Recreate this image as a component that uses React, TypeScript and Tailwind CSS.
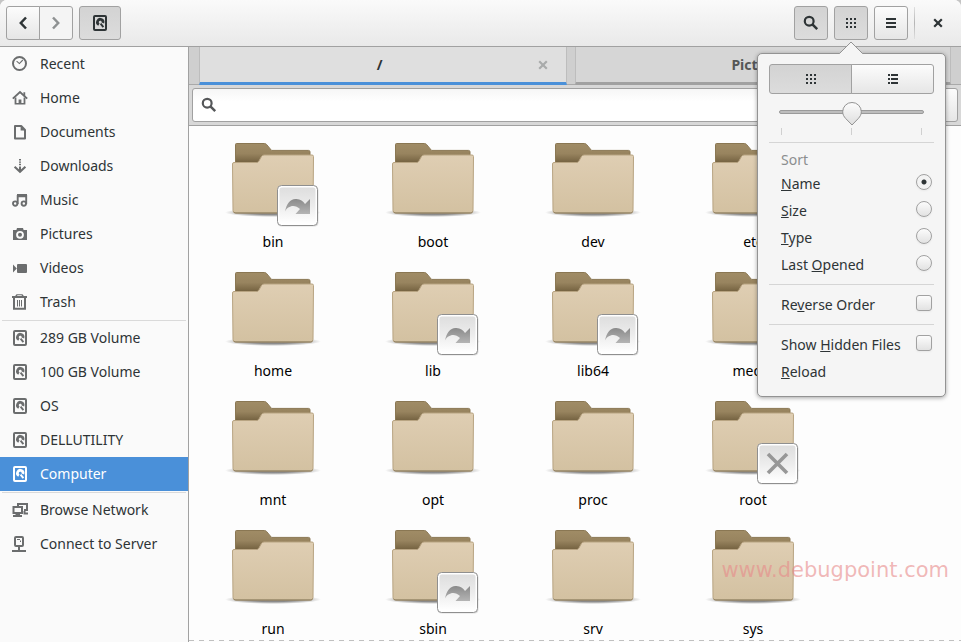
import React, { useState } from 'react';

type IconProps = { className?: string };

function Svg({ children, className = '' }: { children: React.ReactNode; className?: string }) {
  return (
    <svg viewBox="0 0 16 16" width="16" height="16" fill="currentColor" className={`shrink-0 ${className}`} aria-hidden="true">
      {children}
    </svg>
  );
}

const RecentIcon = () => (
  <Svg>
    <circle cx="7.5" cy="7.5" r="6.5" fill="none" stroke="currentColor" strokeWidth="2" />
    <path d="M4.6 5.2 7.4 7.6l3.4-3.6" fill="none" stroke="currentColor" strokeWidth="1.1" />
  </Svg>
);

const HomeIcon = () => (
  <Svg>
    <path d="M.8 8.6 8 2l7.2 6.6" fill="none" stroke="currentColor" strokeWidth="1.9" />
    <path d="M11.4 2.2h1.8v4h-1.8z" />
    <path d="M2.6 7.6h1.8V13h2.2V9.4h2.8V13h2.2V7.6h1.8v7H2.6z" />
  </Svg>
);

const DocumentIcon = () => (
  <Svg>
    <path d="M3 2h6.2L13 6v8.500H3z" fill="none" stroke="currentColor" strokeWidth="2" strokeLinejoin="round" />
    <path d="M8.600 2v4.400H13z" />
  </Svg>
);

const DownloadIcon = () => (
  <Svg>
    <path d="M7 1h2v1.400H7zM7 3.400h2v1.400H7zM7 5.800h2v1.400H7zM7 8.400h2v5H7z" />
    <path d="m2.600 8.800 5.400 5 5.400-5" fill="none" stroke="currentColor" strokeWidth="2.100" />
  </Svg>
);

const MusicIcon = () => (
  <Svg>
    <path d="M5 2h10v3.2H5z" />
    <g fill="none" stroke="currentColor" strokeWidth="1.9">
      <circle cx="3.2" cy="11.6" r="2.2" />
      <circle cx="11.8" cy="11.6" r="2.2" />
      <path d="M5.7 12V3M14.2 12V3" />
    </g>
  </Svg>
);

const CameraIcon = () => (
  <Svg>
    <path fillRule="evenodd" d="M5 2h6l.6 2H15v10H1V4h3.4zM8 4.900a3.900 3.900 0 1 0 0 7.800 3.900 3.900 0 0 0 0-7.800z" />
    <circle cx="8" cy="8.800" r="2" />
  </Svg>
);

const VideoIcon = () => (
  <Svg>
    <path d="M1 4.500 4.800 8.500 1 12.500z" />
    <rect x="5" y="4" width="10" height="9" rx="1" />
  </Svg>
);

const TrashIcon = () => (
  <Svg>
    <path d="M0 2h3.200L4.500.2h6L11.800 2H15v2H0zM5 2h5l-.5-.7h-4z" fillRule="evenodd" />
    <path d="M2 4v10.800h11V4" fill="none" stroke="currentColor" strokeWidth="2" />
    <path d="M5.500 6v6.500M7.500 6v6.500M9.500 6v6.500" stroke="currentColor" strokeWidth="1" />
  </Svg>
);

const DriveIcon = ({ className }: IconProps) => (
  <Svg className={className}>
    <rect x="2" y="1" width="12" height="14" rx="1" fill="none" stroke="currentColor" strokeWidth="2" />
    <path d="M10.900 8A2.800 2.800 0 1 0 6.900 9.600" fill="none" stroke="currentColor" strokeWidth="2.700" />
    <path d="m8.600 8.600 2.800 3.600" stroke="currentColor" strokeWidth="1.900" />
  </Svg>
);

const NetworkIcon = () => (
  <Svg>
    <g fill="none" stroke="currentColor" strokeWidth="2">
      <path d="M6 4V2h9v6h-3" />
      <rect x="1.500" y="5" width="8.500" height="6" />
    </g>
    <path d="M3.500 11.500h4.500V13h2v2H1v-2h2.500zM11.500 9h2v1.500H16v2h-4.500z" />
  </Svg>
);

const ServerIcon = () => (
  <Svg>
    <rect x="3" y="1" width="8" height="9" rx="1" fill="none" stroke="currentColor" strokeWidth="2" />
    <path d="M5 3h3v1H5zM8 4.500h1v1.500H8zM6 10h2v4H6zM0 14h14v2H0z" />
  </Svg>
);

const SearchIcon = () => (
  <Svg>
    <circle cx="6.200" cy="6.200" r="4.400" fill="none" stroke="currentColor" strokeWidth="2.200" />
    <path d="m9.400 9.400 4.800 4.800" stroke="currentColor" strokeWidth="2.500" />
  </Svg>
);

const GridIcon = () => (
  <Svg>
    {[3, 7, 11].map((y) => [3, 7, 11].map((x) => <rect key={`${x}-${y}`} x={x} y={y} width="2" height="2" />))}
  </Svg>
);

const ListIcon = () => (
  <Svg>
    <path d="M3 3h2v2H3zM3 7h2v2H3zM3 11h2v2H3zM6 3h7v2H6zM6 7h7v2H6zM6 11h7v2H6z" />
  </Svg>
);

const MenuIcon = () => (
  <Svg>
    <path d="M3 3h10v2H3zM3 7h10v2H3zM3 11h10v2H3z" />
  </Svg>
);

const CloseIcon = ({ className }: IconProps) => (
  <Svg className={className}>
    <path d="m4.200 4.200 7.600 7.600m0-7.600-7.600 7.600" stroke="currentColor" strokeWidth="2.200" />
  </Svg>
);

const BackIcon = () => (
  <Svg>
    <path d="M11 2.500 5.800 8l5.200 5.500" fill="none" stroke="currentColor" strokeWidth="2.500" />
  </Svg>
);

const ForwardIcon = () => (
  <Svg>
    <path d="M5 2.500 10.200 8 5 13.500" fill="none" stroke="currentColor" strokeWidth="2.500" />
  </Svg>
);

const places = [
  { name: 'Recent', icon: RecentIcon },
  { name: 'Home', icon: HomeIcon },
  { name: 'Documents', icon: DocumentIcon },
  { name: 'Downloads', icon: DownloadIcon },
  { name: 'Music', icon: MusicIcon },
  { name: 'Pictures', icon: CameraIcon },
  { name: 'Videos', icon: VideoIcon },
  { name: 'Trash', icon: TrashIcon },
];

const devices = [
  { name: '289 GB Volume', icon: DriveIcon },
  { name: '100 GB Volume', icon: DriveIcon },
  { name: 'OS', icon: DriveIcon },
  { name: 'DELLUTILITY', icon: DriveIcon },
  { name: 'Computer', icon: DriveIcon },
];

const network = [
  { name: 'Browse Network', icon: NetworkIcon },
  { name: 'Connect to Server', icon: ServerIcon },
];

type Folder = { name: string; badge?: 'link' | 'locked' };

const folders: Folder[] = [
  { name: 'bin', badge: 'link' },
  { name: 'boot' },
  { name: 'dev' },
  { name: 'etc' },
  { name: 'home' },
  { name: 'lib', badge: 'link' },
  { name: 'lib64', badge: 'link' },
  { name: 'media' },
  { name: 'mnt' },
  { name: 'opt' },
  { name: 'proc' },
  { name: 'root', badge: 'locked' },
  { name: 'run' },
  { name: 'sbin', badge: 'link' },
  { name: 'srv' },
  { name: 'sys' },
];

const raised = 'border border-[#a1a1a1] bg-linear-to-b from-[#fcfcfc] to-[#e6e6e6]';
const pressed = 'border border-[#a1a1a1] bg-linear-to-b from-[#d3d3d3] to-[#dcdcdc]';

function FolderDefs() {
  return (
    <svg width="0" height="0" className="absolute" aria-hidden="true">
      <defs>
        <linearGradient id="folder-back" x1="0" y1="0" x2="0" y2="1">
          <stop offset="0" stopColor="#a08c66" />
          <stop offset="0.15" stopColor="#98845f" />
          <stop offset="0.3" stopColor="#6f5d3c" />
        </linearGradient>
        <linearGradient id="folder-front" x1="0" y1="0" x2="0" y2="1">
          <stop offset="0" stopColor="#dfceb3" />
          <stop offset="1" stopColor="#d3c1a1" />
        </linearGradient>
        <radialGradient id="folder-shadow">
          <stop offset="0.500" stopColor="#000" stopOpacity="0.450" />
          <stop offset="1" stopColor="#000" stopOpacity="0" />
        </radialGradient>
        <linearGradient id="badge-bg" x1="0" y1="0" x2="0" y2="1">
          <stop offset="0" stopColor="#dedede" />
          <stop offset="0.500" stopColor="#ececec" />
          <stop offset="1" stopColor="#fff" />
        </linearGradient>
        <linearGradient id="badge-fg" x1="0" y1="0" x2="0" y2="1">
          <stop offset="0" stopColor="#8a8a8a" />
          <stop offset="1" stopColor="#b4b4b4" />
        </linearGradient>
      </defs>
    </svg>
  );
}

function FolderIcon({ badge }: { badge?: Folder['badge'] }) {
  return (
    <svg viewBox="0 0 96 86" width="96" height="86" aria-hidden="true">
      <ellipse cx="48" cy="70.500" rx="48" ry="4.500" fill="url(#folder-shadow)" />
      <path
        d="M10.500 69V2.500q0-1 1-1h28q1.200 0 2 .9l5 6h37q1.500 0 1.500 1.500V69z"
        fill="url(#folder-back)"
        stroke="#8a7753"
      />
      <path
        d="M7.500 22q0-1.500 1.500-1.500h22.500q1.500 0 2.300-1.200l2.700-4.800q1-1.500 2.500-1.500H87q1.500 0 1.500 1.500L88 68.500q0 2.500-2.500 2.500H10.500Q8 71 8 68.500z"
        fill="url(#folder-front)"
        stroke="#b8a482"
      />
      <path d="M8.800 70q.7 1 2 1H85.500q1.300 0 2-1" fill="none" stroke="#857658" />
      {badge && (
        <g>
          <rect x="52.500" y="44.500" width="41" height="40" rx="4" fill="#000" opacity="0.120" />
          <rect x="52.500" y="43.500" width="40" height="40" rx="4" fill="#fff" stroke="#8f8f8f" />
          <rect x="54.500" y="45.500" width="36" height="36" rx="2.500" fill="url(#badge-bg)" />
          {badge === 'link' ? (
            <path
              d="M60 69.500C61.500 61.500 65 57.500 70.500 57c4.500-.4 7.500 2 9.500 5l5-5v15H70.500l4.500-5C69.500 61.500 62.500 64 60 69.500z"
              fill="url(#badge-fg)"
            />
          ) : (
            <path d="m63 54 19 19m0-19L63 73" stroke="#979797" strokeWidth="3.600" />
          )}
        </g>
      )}
    </svg>
  );
}

function PlaceList({ items, current, onSelect }: { items: typeof places; current: string; onSelect: (name: string) => void }) {
  return (
    <ul>
      {items.map(({ name, icon: Icon }) => (
        <li key={name}>
          <button
            onClick={() => onSelect(name)}
            className={`w-full h-[34px] pl-3 flex items-center gap-3 text-left ${
              current === name ? 'bg-[#4a90d9] text-white' : 'text-[#2e3436]'
            }`}
          >
            <span className={current === name ? 'text-white' : 'text-[#6b6d6e]'}>
              <Icon />
            </span>
            {name}
          </button>
        </li>
      ))}
    </ul>
  );
}

function Tab({ title, active }: { title: string; active?: boolean }) {
  return (
    <div
      className={`flex items-center border-x border-x-[#bdbdbd] border-b-3 pr-[15px] ${
        active
          ? 'flex-49 bg-[#dfdfdf] border-b-[#4a90d9] text-[#2e3436]'
          : 'flex-50 bg-[#d6d6d6] border-b-[#a1a1a1] text-[#555757]'
      }`}
    >
      <button className="flex-1 font-bold pl-6">{title}</button>
      <button aria-label={`Close ${title}`} className="text-[#a9abab]">
        <CloseIcon />
      </button>
    </div>
  );
}

const sortOptions = [
  { id: 'name', label: <><u>N</u>ame</> },
  { id: 'size', label: <><u>S</u>ize</> },
  { id: 'type', label: <><u>T</u>ype</> },
  { id: 'last-opened', label: <>Last <u>O</u>pened</> },
];

const boxStyle = 'appearance-none size-4 mb-[3px] border border-[#a1a1a1] bg-linear-to-b from-[#fcfcfc] to-[#e2e2e2] shadow-xs';

function CheckRow({ id, children }: { id: string; children: React.ReactNode }) {
  return (
    <div className="h-[27px] pl-3 pr-[2px] flex items-center justify-between">
      <label htmlFor={id}>{children}</label>
      <input id={id} type="checkbox" className={`${boxStyle} rounded-[3px] checked:from-[#4a90d9] checked:to-[#4a90d9]`} />
    </div>
  );
}

function ViewPopover() {
  const [view, setView] = useState('grid');
  const [zoom, setZoom] = useState(50);
  const [sort, setSort] = useState('name');

  return (
    <div className="absolute top-[53px] right-[15px] z-10 w-[189px] rounded-[5px] border border-[#939393] bg-[#f5f5f5] px-[11px] pt-[10px] pb-[11px] shadow-[0_1px_4px_rgba(0,0,0,0.35)]">
      <svg viewBox="0 0 24 13" width="24" height="13" className="absolute -top-[13px] left-[81px]" aria-hidden="true">
        <path d="M0 13 12 1l12 12z" fill="#f5f5f5" />
        <path d="M0 12.500h.5L12 1l11.500 11.500h.5" fill="none" stroke="#939393" />
      </svg>

      <div className="flex h-[30px]">
        <button
          aria-label="Icon view"
          onClick={() => setView('grid')}
          className={`flex-1 flex items-center justify-center rounded-l-[3px] ${view === 'grid' ? pressed : raised}`}
        >
          <GridIcon />
        </button>
        <button
          aria-label="List view"
          onClick={() => setView('list')}
          className={`flex-1 -ml-px flex items-center justify-center rounded-r-[3px] ${view === 'list' ? pressed : raised}`}
        >
          <ListIcon />
        </button>
      </div>

      <div className="relative mx-[10px] mt-2 h-10">
        <div className="absolute inset-x-0 top-2 h-1 rounded-full border border-[#9a9a9a] bg-[#bdbdbd]" />
        <div className="absolute inset-x-[2px] top-[26px] flex justify-between">
          <i className="h-[7px] w-px bg-[#d0d0d0]" />
          <i className="h-[7px] w-px bg-[#d0d0d0]" />
          <i className="h-[7px] w-px bg-[#d0d0d0]" />
        </div>
        <svg
          viewBox="0 0 20 24"
          width="20"
          height="24"
          className="absolute top-0 -translate-x-1/2"
          style={{ left: `${zoom}%` }}
          aria-hidden="true"
        >
          <defs>
            <linearGradient id="thumb" x1="0" y1="0" x2="0" y2="1">
              <stop offset="0" stopColor="#fcfcfc" />
              <stop offset="1" stopColor="#dedede" />
            </linearGradient>
          </defs>
          <path d="M10 .500a9.200 9.200 0 0 1 9.300 9.300c0 3-1.300 4.700-3 6.700L10 23l-6.300-6.500c-1.700-2-3-3.700-3-6.700A9.200 9.200 0 0 1 10 .500z" fill="url(#thumb)" stroke="#929292" />
        </svg>
        <input
          type="range"
          aria-label="Zoom"
          value={zoom}
          onChange={(e) => setZoom(Number(e.target.value))}
          className="absolute inset-x-0 top-0 h-6 w-full opacity-0"
        />
      </div>

      <hr className="border-[#d5d5d5]" />
      <p className="h-[27px] pl-3 pt-[7px] text-[#8b8e8f]">Sort</p>
      {sortOptions.map((o) => (
        <div key={o.id} className="h-[27px] pl-3 pr-[2px] flex items-center justify-between">
          <label htmlFor={o.id}>{o.label}</label>
          <input
            id={o.id}
            type="radio"
            name="sort"
            checked={sort === o.id}
            onChange={() => setSort(o.id)}
            className={`${boxStyle} rounded-full checked:bg-[radial-gradient(circle,#2e3436_0_2px,#f3f3f3_3px)]`}
          />
        </div>
      ))}

      <hr className="my-[6px] border-[#d5d5d5]" />
      <CheckRow id="reverse">Re<u>v</u>erse Order</CheckRow>
      <hr className="my-[6px] border-[#d5d5d5]" />
      <CheckRow id="hidden-files">Show <u>H</u>idden Files</CheckRow>
      <button className="block h-[27px] w-full pl-3 text-left"><u>R</u>eload</button>
    </div>
  );
}

export default function App() {
  const [place, setPlace] = useState('Computer');

  return (
    <div className="h-screen bg-[#c4c4c4] font-['Noto_Sans','Open_Sans',sans-serif] text-[14px] leading-5 text-[#2e3436]">
      <FolderDefs />
      <div className="relative h-full flex flex-col overflow-hidden rounded-t-[7px] bg-white">
        <header className="h-[47px] shrink-0 flex items-center px-[6px] border-b border-[#a1a1a1] bg-linear-to-b from-[#fafafa] to-[#e9e9e9]">
          <div className="flex h-[34px]">
            <button aria-label="Back" className={`w-[34px] flex items-center justify-center rounded-l-[3px] ${raised}`}>
              <BackIcon />
            </button>
            <button aria-label="Forward" disabled className="w-[34px] -ml-px flex items-center justify-center rounded-r-[3px] border border-[#a1a1a1] bg-[#f4f4f4] text-[#8e9192]">
              <ForwardIcon />
            </button>
          </div>
          <button aria-label="Computer" className={`ml-[6px] h-[34px] w-[42px] flex items-center justify-center rounded-[3px] ${pressed}`}>
            <DriveIcon />
          </button>

          <div className="ml-auto flex items-center gap-[6px]">
            <button aria-label="Search" className={`size-[34px] flex items-center justify-center rounded-[3px] ${pressed}`}>
              <SearchIcon />
            </button>
            <button aria-label="View options" className={`size-[34px] flex items-center justify-center rounded-[3px] ${pressed}`}>
              <GridIcon />
            </button>
            <button aria-label="Menu" className={`size-[34px] flex items-center justify-center rounded-[3px] ${raised}`}>
              <MenuIcon />
            </button>
            <span className="h-8 w-px bg-linear-to-b from-[#e0e0e0] via-[#b5b5b5] to-[#e0e0e0]" />
            <button aria-label="Close" className="size-[34px] flex items-center justify-center">
              <CloseIcon />
            </button>
          </div>
        </header>

        <div className="flex-1 min-h-0 flex">
          <nav className="w-[189px] shrink-0 border-r border-[#a1a1a1] bg-[#fafafa]">
            <PlaceList items={places} current={place} onSelect={setPlace} />
            <hr className="mx-[2px] mt-px border-[#dadada]" />
            <PlaceList items={devices} current={place} onSelect={setPlace} />
            <hr className="mx-[2px] mt-px border-[#dadada]" />
            <PlaceList items={network} current={place} onSelect={setPlace} />
          </nav>

          <main className="relative flex-1 min-w-0 flex flex-col bg-[#fdfdfd]">
            <div className="h-[38px] shrink-0 flex gap-2 px-[10px] bg-[#cfcfcf] shadow-[inset_0_-1px_0_#a9a9a9]">
              <Tab title="/" active />
              <Tab title="Pictures" />
            </div>

            <div className="h-[41px] shrink-0 flex items-center px-[3px] border-b border-[#a1a1a1] bg-[#d8d8d8]">
              <div className="flex-1 h-[34px] flex items-center gap-2 px-2 rounded-l-[3px] border border-[#a1a1a1] bg-linear-to-b from-[#f6f6f6] to-white to-40% text-[#555759]">
                <SearchIcon />
                <input type="search" aria-label="Search files" className="flex-1 outline-none" />
              </div>
              <button aria-label="Search filters" className={`h-[34px] w-8 -ml-px rounded-r-[3px] ${raised}`} />
            </div>

            <ul className="flex-1 min-h-0 overflow-hidden flex flex-wrap content-start px-1 text-black">
              {folders.map((f) => (
                <li key={f.name} className="w-40 h-[129px] pt-4 flex flex-col items-center gap-1">
                  <FolderIcon badge={f.badge} />
                  <span>{f.name}</span>
                </li>
              ))}
            </ul>

            <p className="absolute right-3 bottom-[60px] font-['DejaVu_Sans',sans-serif] text-[21px] leading-6 text-[#e88a8a]/60">
              www.debugpoint.com
            </p>
            <div className="absolute inset-x-0 bottom-px h-px bg-[repeating-linear-gradient(to_right,#c0c0c0_0_5px,transparent_5px_10px)]" />
          </main>
        </div>

        <ViewPopover />
      </div>
    </div>
  );
}
